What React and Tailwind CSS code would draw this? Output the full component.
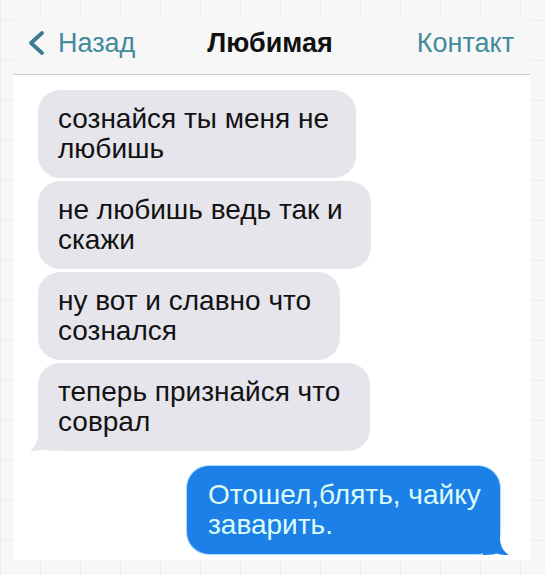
import React from "react";

const incoming = [
  { id: 1, lines: ["сознайся ты меня не", "любишь"], width: "w-[318px]" },
  { id: 2, lines: ["не любишь ведь так и", "скажи"], width: "w-[333px]" },
  { id: 3, lines: ["ну вот и славно что", "сознался"], width: "w-[302px]" },
  { id: 4, lines: ["теперь признайся что", "соврал"], width: "w-[332px]", tail: true },
];

// little hook under the last bubble of a group
const TailLeft = () => (
  <svg
    width="26"
    height="26"
    viewBox="0 0 26 26"
    className="absolute left-[-8px] bottom-0"
  >
    <path d="M8 0 V8 C8 17 5 22 0 26 C5 26.3 9 25.6 12.5 24.6 C15 25.6 19 26 26 26 V0 Z" fill="#e6e5eb" />
  </svg>
);

const TailRight = () => (
  <svg
    width="26"
    height="26"
    viewBox="0 0 26 26"
    className="absolute right-[-9px] bottom-[-1px]"
  >
    <path d="M17 0 V8 C17 17 20 22 26 26 C21 26.3 17 25.6 13.5 24.6 C11 25.6 7 26 0 26 V0 Z" fill="#1c80e8" />
  </svg>
);

const App = () => {
  return (
    <div
      className="min-h-screen w-full bg-[#f7f7f9] bg-[linear-gradient(to_right,#ebebef_1px,transparent_1px),linear-gradient(to_bottom,#ebebef_1px,transparent_1px)] bg-[size:40px_40px] bg-[position:0_20px] pl-[13px] pt-[15px] font-['Liberation_Sans',Arial,sans-serif]"
    >
      <div className="w-[517px] h-[545px] bg-white flex flex-col">
        {/* Navigation bar */}
        <div className="h-[60px] bg-[#f7f7f8] border-b border-[#c8c8cd] grid grid-cols-[1fr_auto_1fr] items-center pl-[13px] pr-[16px] pb-[3px]">
          <div className="flex items-center gap-[12px] text-[27px] text-[#438b9b]">
            <svg width="20" height="26" viewBox="0 0 20 26">
              <path
                d="M16 3 L5 13 L16 23"
                fill="none"
                stroke="#3b7b93"
                strokeWidth="3.8"
                strokeLinecap="round"
                strokeLinejoin="round"
              />
            </svg>
            <span>Назад</span>
          </div>
          <div className="text-[27px] font-bold text-[#111]">Любимая</div>
          <div className="justify-self-end text-[27px] text-[#438b9b]">Контакт</div>
        </div>

        {/* Conversation */}
        <div className="flex flex-col pt-[15px] pl-[25px] pr-[30px]">
          <div className="flex flex-col gap-[3px]">
            {incoming.map((msg) => (
              <div
                key={msg.id}
                className={`relative ${msg.width} h-[88px] rounded-[22px] bg-[#e6e5eb] pl-[20px] pt-[14px] text-[28px] leading-[30px] text-[#121212] whitespace-nowrap`}
              >
                {msg.lines[0]}
                <br />
                {msg.lines[1]}
                {msg.tail && <TailLeft />}
              </div>
            ))}
          </div>

          <div className="flex justify-end mt-[15px]">
            <div className="relative w-[313px] h-[88px] rounded-[22px] bg-[#1c80e8] shadow-[0_0_0_1px_#a8dcf6] pl-[21px] pt-[14px] text-[28px] leading-[30px] text-[#dcfcf6] whitespace-nowrap">
              Отошел,блять, чайку
              <br />
              заварить.
              <TailRight />
            </div>
          </div>
        </div>
      </div>
    </div>
  );
};

export default App;
